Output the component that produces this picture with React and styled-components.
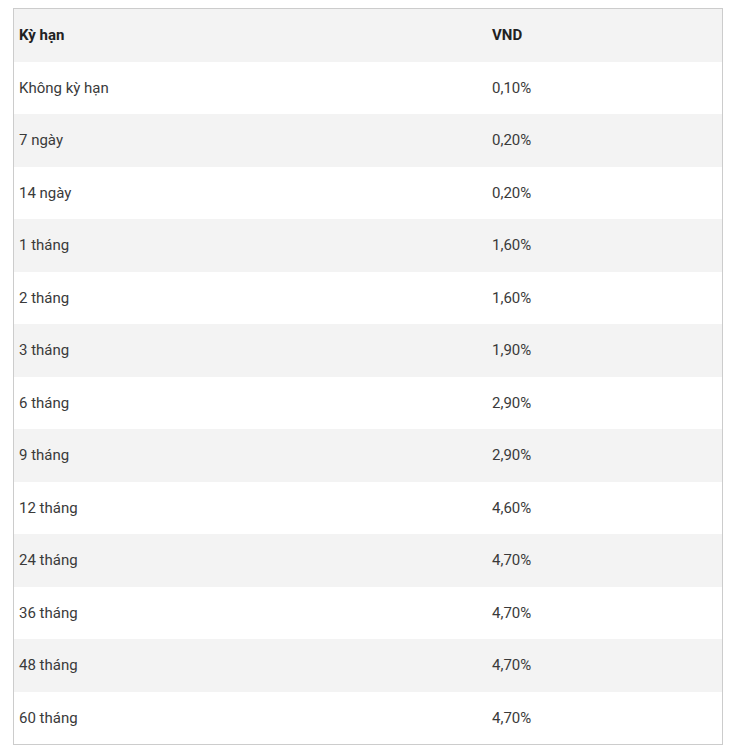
import React from "react";
import styled, { createGlobalStyle } from "styled-components";

const GlobalStyle = createGlobalStyle`
  body {
    margin: 0;
    background: #fff;
    font-family: Roboto, "Liberation Sans", sans-serif;
  }
`;

const Page = styled.div`
  padding: 8px 10px 8px 13px;
`;

const Table = styled.div`
  width: 710px;
  border: 1px solid #cccccc;
  box-sizing: border-box;
`;

const Row = styled.div`
  display: grid;
  grid-template-columns: 473px 1fr;
  height: 52.5px;
  align-items: center;
  background: ${(p) => (p.$shaded ? "#f3f3f3" : "#ffffff")};
`;

const Cell = styled.div`
  padding-left: 5px;
  font-size: 15px;
  color: ${(p) => (p.$head ? "#222222" : "#3a3a3a")};
  font-weight: ${(p) => (p.$head ? 700 : 400)};
`;

const rates = [
  ["Không kỳ hạn", "0,10%"],
  ["7 ngày", "0,20%"],
  ["14 ngày", "0,20%"],
  ["1 tháng", "1,60%"],
  ["2 tháng", "1,60%"],
  ["3 tháng", "1,90%"],
  ["6 tháng", "2,90%"],
  ["9 tháng", "2,90%"],
  ["12 tháng", "4,60%"],
  ["24 tháng", "4,70%"],
  ["36 tháng", "4,70%"],
  ["48 tháng", "4,70%"],
  ["60 tháng", "4,70%"],
];

const App = () => {
  return (
    <Page>
      <GlobalStyle />
      <Table>
        <Row $shaded>
          <Cell $head>Kỳ hạn</Cell>
          <Cell $head>VND</Cell>
        </Row>
        {rates.map(([term, rate], i) => (
          <Row key={term} $shaded={i % 2 === 1}>
            <Cell>{term}</Cell>
            <Cell>{rate}</Cell>
          </Row>
        ))}
      </Table>
    </Page>
  );
};

export default App;
